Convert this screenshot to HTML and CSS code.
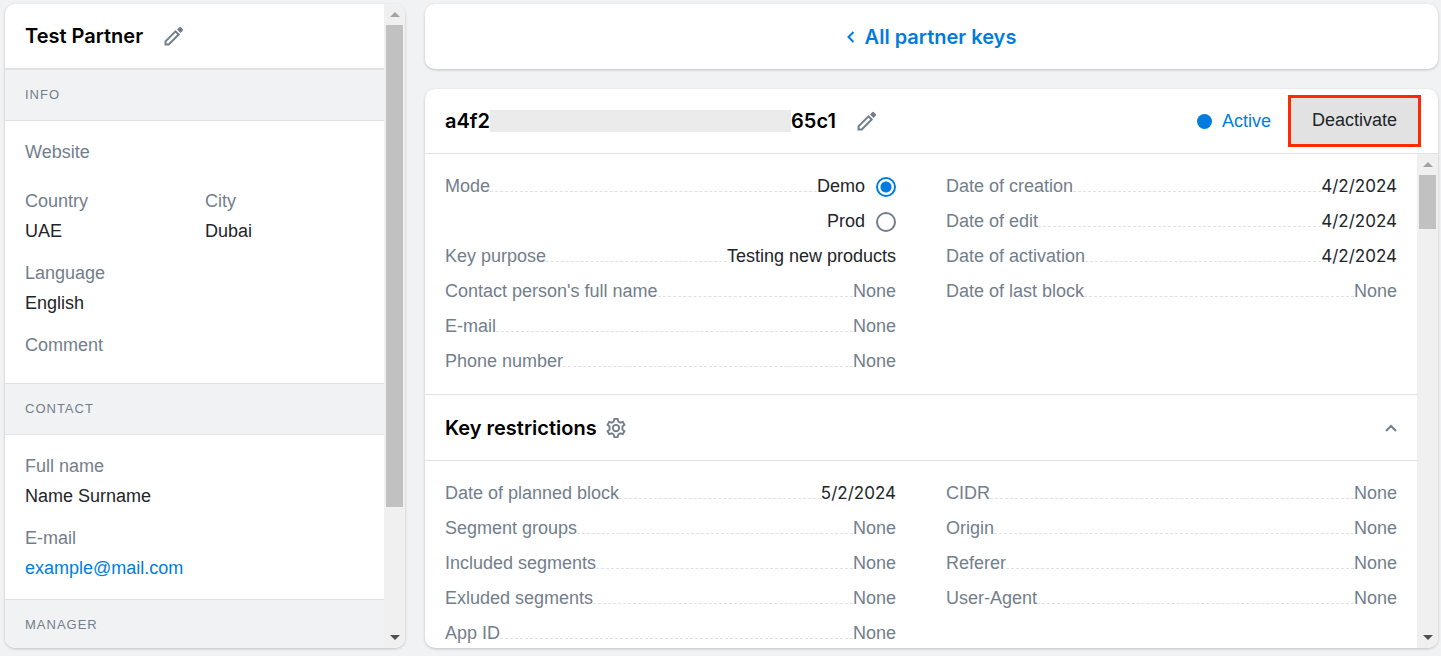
FILE: index.html
```html
<!DOCTYPE html>
<html lang="en">

<head>
    <meta charset="UTF-8">
    <title>Test Partner</title>

    <link rel="stylesheet" href="styles.css">
</head>

<body>
<aside class="panel sidebar">
    <div class="content">
        <div class="partner">
            <h2>Test Partner</h2>
            <button class="icon-button" aria-label="Edit partner">
                <svg class="icon" viewBox="0 0 20 20"><path d="M1.500 15.300v3.200h3.200L14.700 8.500l-3.200-3.200z" /><path class="fill" d="M13 3.500l3.500 3.500 2.200-2.200a1.200 1.200 0 0 0 0-1.700L16.900 1.300a1.200 1.200 0 0 0-1.700 0z" /></svg>
            </button>
        </div>

        <h3>Info</h3>
        <dl class="info">
            <div class="field"><dt>Website</dt><dd></dd></div>
            <div class="pair">
                <div class="field"><dt>Country</dt><dd>UAE</dd></div>
                <div class="field"><dt>City</dt><dd>Dubai</dd></div>
            </div>
            <div class="field"><dt>Language</dt><dd>English</dd></div>
            <div class="field"><dt>Comment</dt><dd></dd></div>
        </dl>

        <h3>Contact</h3>
        <dl class="info">
            <div class="field"><dt>Full name</dt><dd>Name Surname</dd></div>
            <div class="field"><dt>E-mail</dt><dd><a href="mailto:example@mail.com">example@mail.com</a></dd></div>
        </dl>

        <h3>Manager</h3>
    </div>
    <div class="scrollbar">
        <span class="arrow up"></span>
        <div class="track"><div class="thumb" style="height: 80%"></div></div>
        <span class="arrow down"></span>
    </div>
</aside>

<main>
    <nav class="panel back">
        <a href="#">
            <svg class="icon chevron-left" viewBox="0 0 8 12"><path d="M6.500 1L1.500 6l5 5" /></svg>
            All partner keys
        </a>
    </nav>

    <section class="panel key">
        <header>
            <h2>a4f2<span class="hidden-part"></span>65c1</h2>
            <button class="icon-button" aria-label="Edit key">
                <svg class="icon" viewBox="0 0 20 20"><path d="M1.500 15.300v3.200h3.200L14.700 8.500l-3.200-3.200z" /><path class="fill" d="M13 3.500l3.500 3.500 2.200-2.200a1.200 1.200 0 0 0 0-1.700L16.900 1.300a1.200 1.200 0 0 0-1.700 0z" /></svg>
            </button>
            <span class="status">Active</span>
            <button class="deactivate">Deactivate</button>
        </header>

        <div class="scroll-area">
            <div class="content">
                <div class="columns">
                    <dl>
                        <div class="row">
                            <dt>Mode</dt>
                            <dd><label>Demo <input type="radio" name="mode" checked></label></dd>
                        </div>
                        <div class="row no-line">
                            <dd><label>Prod <input type="radio" name="mode"></label></dd>
                        </div>
                        <div class="row"><dt>Key purpose</dt><dd>Testing new products</dd></div>
                        <div class="row"><dt>Contact person's full name</dt><dd class="none">None</dd></div>
                        <div class="row"><dt>E-mail</dt><dd class="none">None</dd></div>
                        <div class="row"><dt>Phone number</dt><dd class="none">None</dd></div>
                    </dl>
                    <dl>
                        <div class="row"><dt>Date of creation</dt><dd class="date">4/2/2024</dd></div>
                        <div class="row"><dt>Date of edit</dt><dd class="date">4/2/2024</dd></div>
                        <div class="row"><dt>Date of activation</dt><dd class="date">4/2/2024</dd></div>
                        <div class="row"><dt>Date of last block</dt><dd class="none">None</dd></div>
                    </dl>
                </div>

                <div class="restrictions">
                    <h2>Key restrictions</h2>
                    <button class="icon-button gear" aria-label="Settings">
                        <svg class="icon" viewBox="0 0 24 24"><path d="M10.200 2h3.600l.6 2.900 2.200 1.300 2.800-1 1.800 3.200-2.200 1.900v3.400l2.200 1.900-1.800 3.200-2.800-1-2.200 1.300-.6 2.900h-3.600l-.6-2.900-2.200-1.300-2.800 1-1.800-3.200L5 13.700v-3.400L2.800 8.400l1.800-3.200 2.800 1 2.200-1.300z" /><circle cx="12" cy="12" r="3.500" /></svg>
                    </button>
                    <button class="icon-button collapse" aria-label="Collapse">
                        <svg class="icon" viewBox="0 0 12 8"><path d="M1 7l5-5 5 5" /></svg>
                    </button>
                </div>

                <div class="columns">
                    <dl>
                        <div class="row"><dt>Date of planned block</dt><dd class="date">5/2/2024</dd></div>
                        <div class="row"><dt>Segment groups</dt><dd class="none">None</dd></div>
                        <div class="row"><dt>Included segments</dt><dd class="none">None</dd></div>
                        <div class="row"><dt>Exluded segments</dt><dd class="none">None</dd></div>
                        <div class="row"><dt>App ID</dt><dd class="none">None</dd></div>
                    </dl>
                    <dl>
                        <div class="row"><dt>CIDR</dt><dd class="none">None</dd></div>
                        <div class="row"><dt>Origin</dt><dd class="none">None</dd></div>
                        <div class="row"><dt>Referer</dt><dd class="none">None</dd></div>
                        <div class="row"><dt>User-Agent</dt><dd class="none">None</dd></div>
                    </dl>
                </div>
            </div>
            <div class="scrollbar">
                <span class="arrow up"></span>
                <div class="track"><div class="thumb" style="height: 12%"></div></div>
                <span class="arrow down"></span>
            </div>
        </div>
    </section>
</main>
</body>

</html>
```
FILE: styles.css
```css
* {
    box-sizing: border-box;
}

body {
    display: flex;
    gap: 20px;
    height: 100vh;
    margin: 0;
    padding: 4px 3px 8px 5px;
    background-color: #f1f2f4;
    font-family: "Liberation Sans", Arial, sans-serif;
    font-size: 18px;
    line-height: 30px;
    color: #212529;
}

h2, h3, dl, dd {
    margin: 0;
}

h2 {
    font-family: Inter, sans-serif;
    font-size: 20px;
    font-weight: 600;
    color: #000;
}

a {
    color: #007ce0;
    text-decoration: none;
}

button {
    font: inherit;
    color: inherit;
    cursor: pointer;
}

dt, .none {
    color: #727e8c;
}

.panel {
    background-color: #fff;
    border-radius: 10px;
    box-shadow: 0 1px 3px rgba(0, 0, 0, 0.2);
    overflow: hidden;
}

.content {
    flex: 1;
    min-width: 0;
    overflow: hidden;
}

/* icons */
.icon-button {
    display: flex;
    padding: 0;
    border: none;
    background: none;
    color: #727e8c;
}

.icon {
    display: block;
    width: 20px;
    height: 20px;
    fill: none;
    stroke: currentColor;
    stroke-width: 2;
}

.icon .fill {
    fill: currentColor;
    stroke: none;
}

/* left side */
.sidebar {
    display: flex;
    flex: none;
    width: 400px;
}

.partner {
    display: flex;
    align-items: center;
    gap: 21px;
    height: 65px;
    padding: 0 20px;
    border-bottom: 1px solid #e1e1e1;
}

h3 {
    height: 52px;
    padding: 0 20px;
    border: solid #e1e1e1;
    border-width: 1px 0;
    background-color: #f1f2f4;
    font-size: 13px;
    font-weight: normal;
    line-height: 50px;
    letter-spacing: 1px;
    text-transform: uppercase;
    color: #727e8c;
}

.info {
    display: flex;
    flex-direction: column;
    gap: 12px;
    padding: 16px 20px;
}

.pair {
    display: grid;
    grid-template-columns: 180px 1fr;
}

.field dd {
    min-height: 7px;
}

/* right side */
main {
    display: flex;
    flex: 1;
    flex-direction: column;
    gap: 20px;
    min-width: 0;
}

.back {
    display: flex;
    flex: none;
    align-items: center;
    justify-content: center;
    height: 65px;
}

.back a {
    display: flex;
    align-items: center;
    gap: 10px;
    font-family: Inter, sans-serif;
    font-size: 20px;
    font-weight: 600;
}

.chevron-left {
    width: 8px;
    height: 12px;
}

.key {
    display: flex;
    flex: 1;
    flex-direction: column;
    min-height: 0;
}

.key header {
    display: flex;
    flex: none;
    align-items: center;
    height: 65px;
    padding: 0 17px 0 20px;
    border-bottom: 1px solid #e1e1e1;
}

.key header h2 {
    display: flex;
    align-items: center;
    margin-right: 21px;
}

.hidden-part {
    width: 301px;
    height: 22px;
    background-color: #ebebeb;
}

.status {
    display: flex;
    align-items: center;
    gap: 10px;
    margin: 0 17px 0 auto;
    color: #007ce0;
}

.status::before {
    content: "";
    width: 15px;
    height: 15px;
    border-radius: 50%;
    background-color: #007ce0;
}

.deactivate {
    height: 52px;
    padding: 0 21px 2px;
    border: 3px solid #ff2a00;
    background-color: #e2e2e2;
}

.scroll-area {
    display: flex;
    flex: 1;
    min-height: 0;
}

.columns {
    display: grid;
    grid-template-columns: 1fr 1fr;
    gap: 50px;
    padding: 15px 20px;
}

.row {
    display: flex;
    align-items: baseline;
    height: 35px;
    line-height: 35px;
}

/* dashed line between the name and the value */
.row::before {
    content: "";
    flex: 1;
    order: 1;
    border-bottom: 1px dashed #dfe1e4;
}

.row dd {
    order: 2;
}

.row .date {
    font-family: Inter, sans-serif;
    font-size: 17px;
}

.row.no-line::before {
    border: none;
}

.row label {
    display: flex;
    align-items: center;
    gap: 11px;
}

input[type="radio"] {
    appearance: none;
    width: 20px;
    height: 20px;
    margin: 0;
    border: 2px solid #727e8c;
    border-radius: 50%;
}

input[type="radio"]:checked {
    border-color: #007ce0;
    background: radial-gradient(circle, #007ce0 5px, #fff 6px);
}

.restrictions {
    display: flex;
    align-items: center;
    gap: 8px;
    height: 67px;
    padding: 0 20px;
    border: solid #e1e1e1;
    border-width: 1px 0;
}

.gear .icon {
    width: 22px;
    height: 22px;
}

.collapse {
    margin-left: auto;
}

.collapse .icon {
    width: 12px;
    height: 8px;
}

/* scrollbars */
.scrollbar {
    display: flex;
    flex: none;
    flex-direction: column;
    align-items: center;
    width: 21px;
    background-color: #f0f0f0;
}

.track {
    flex: 1;
    width: 17px;
}

.thumb {
    background-color: #c1c1c1;
}

.arrow {
    display: flex;
    align-items: center;
    height: 21px;
}

.arrow::before {
    content: "";
    border: solid transparent;
    border-width: 0 5px;
}

.up::before {
    border-bottom: 5px solid #a3a3a3;
}

.down::before {
    border-top: 5px solid #505050;
}
```
